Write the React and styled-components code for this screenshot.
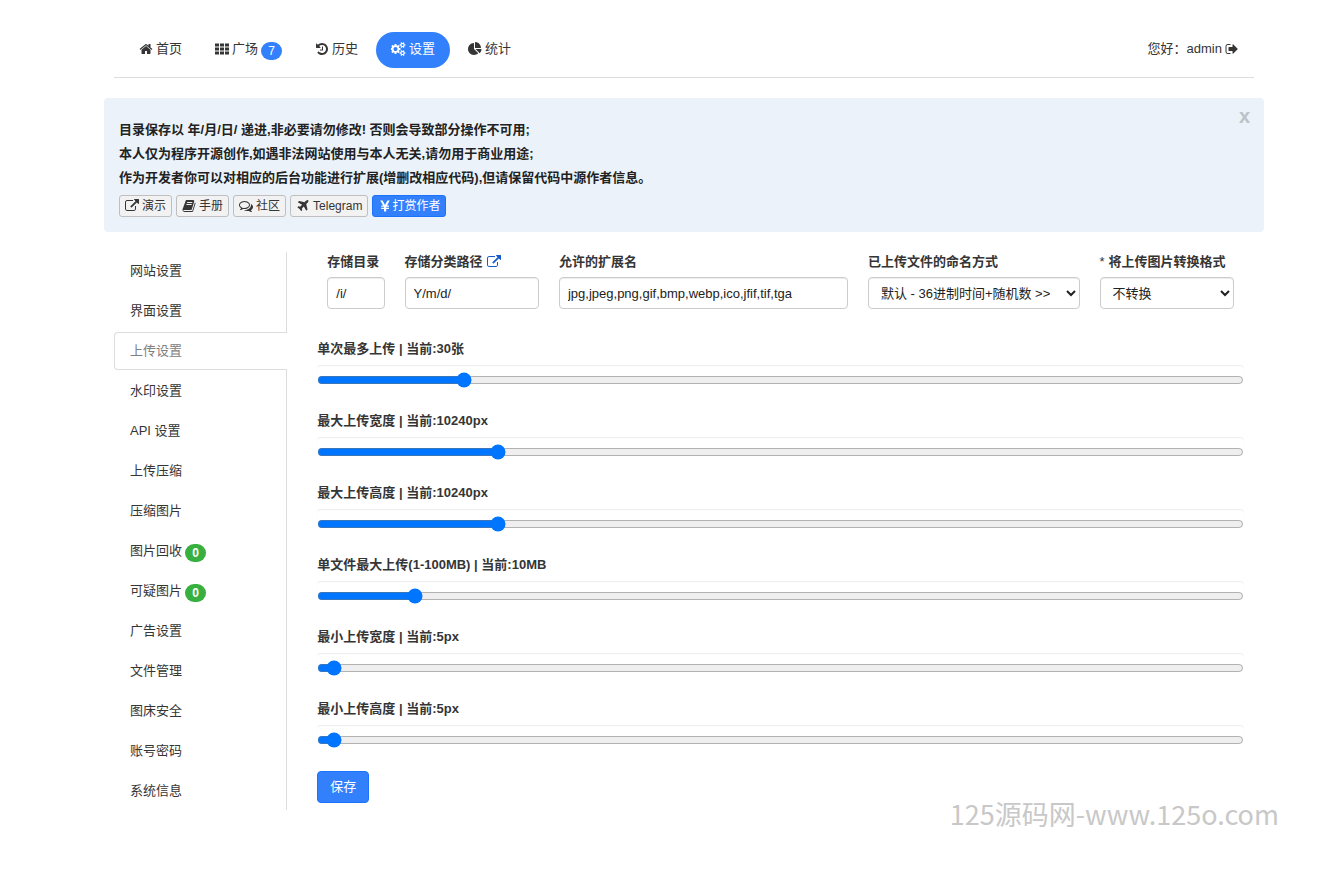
import { useState } from 'react';
import styled, { createGlobalStyle } from 'styled-components';

const GlobalStyle = createGlobalStyle`
    *, *::before, *::after {
        box-sizing: border-box;
    }

    body {
        margin: 0;
        background-color: #fff;
        color: #353535;
        font-family: "Liberation Sans", "Noto Sans CJK SC", sans-serif;
        font-size: 13px;
        line-height: 20px;
    }

    input, select, button {
        font-family: inherit;
        font-size: inherit;
        line-height: inherit;
        color: inherit;
    }
`;

const gear = 'q0 16-149 31-12 27-30 52 51 113 51 138 0 4-4 7-122 71-124 71-8 0-46-47t-52-68q-20 2-30 2t-30-2q-14 21-52 68t-46 47q-2 0-124-71-4-3-4-7 0-25 51-138-18-25-30-52-149-15-149-31v-140q0-16 149-31 13-29 30-52-51-113-51-138 0-4 4-7 4-2 35-20t59-34 30-16q8 0 46 46.5t52 67.5q20-2 30-2t30 2q51-71 92-112l6-2q4 0 124 70 4 3 4 7 0 25-51 138 17 23 30 52 149 15 149 31z';

// [viewBox, path]
const icons = {
    home: ['0 0 1792 1792', 'M1472 992v480q0 26-19 45t-45 19h-384v-384h-256v384h-384q-26 0-45-19t-19-45v-480q0-1 .5-3t.5-3l575-474 575 474q1 2 1 6zm223-69l-62 74q-8 9-21 11h-3q-13 0-21-7l-692-577-692 577q-12 8-24 7-13-2-21-11l-62-74q-8-10-7-23.5t11-21.5l719-599q32-26 76-26t76 26l244 204v-195q0-14 9-23t23-9h192q14 0 23 9t9 23v408l219 182q10 8 11 21.5t-7 23.5z'],
    th: ['0 0 1792 1792', 'M0 192h512v384h-512zM640 192h512v384h-512zM1280 192h512v384h-512zM0 704h512v384h-512zM640 704h512v384h-512zM1280 704h512v384h-512zM0 1216h512v384h-512zM640 1216h512v384h-512zM1280 1216h512v384h-512z'],
    history: ['0 0 1792 1792', 'M1664 896q0 156-61 298t-164 245-245 164-298 61q-172 0-327-72.5t-264-204.5q-7-10-6.5-22.5t8.5-20.5l137-138q10-9 25-9 16 2 23 12 73 95 179 147t225 52q104 0 198.5-40.5t163.5-109.5 109.5-163.5 40.5-198.5-40.5-198.5-109.5-163.5-163.5-109.5-198.5-40.5q-98 0-188 35.5t-160 101.5l137 138q31 30 14 69-17 40-59 40h-448q-26 0-45-19t-19-45v-448q0-42 40-59 39-17 69 14l130 129q107-101 244.5-156.5t284.5-55.5q156 0 298 61t245 164 164 245 61 298zM1024 608v448q0 14-9 23t-23 9h-320q-14 0-23-9t-9-23v-64q0-14 9-23t23-9h224v-352q0-14 9-23t23-9h64q14 0 23 9t9 23z'],
    cogs: ['0 0 1920 1792', 'M832 896q0-106-75-181t-181-75-181 75-75 181 75 181 181 75 181-75 75-181zm768 512q0-52-38-90t-90-38-90 38-38 90q0 53 37.5 90.5t90.5 37.5 90.5-37.5 37.5-90.5zm0-1024q0-52-38-90t-90-38-90 38-38 90q0 53 37.5 90.5t90.5 37.5 90.5-37.5 37.5-90.5zm-384 421v185q0 10-7 19.5t-16 10.5l-155 24q-11 35-32 76 34 48 90 115 7 11 7 20 0 12-7 19-23 30-82.5 89.5t-78.5 59.5q-11 0-21-7l-115-90q-37 19-77 31-11 108-23 155-7 24-30 24h-186q-11 0-20-7.5t-10-17.5l-23-153q-34-10-75-31l-118 89q-7 7-20 7-11 0-21-8-144-133-144-160 0-9 7-19 10-14 41-53t47-61q-23-44-35-82l-152-24q-10-1-17-9.5t-7-19.5v-185q0-10 7-19.5t16-10.5l155-24q11-35 32-76-34-48-90-115-7-11-7-20 0-12 7-20 22-30 82-89t79-59q11 0 21 7l115 90q34-18 77-32 11-108 23-154 7-24 30-24h186q11 0 20 7.5t10 17.5l23 153q34 10 75 31l118-89q8-7 20-7 11 0 21 8 144 133 144 160 0 8-7 19-12 16-42 54t-45 60q23 48 34 82l152 23q10 2 17 10.5t7 19.5zm640 533v140' + gear + 'M1856 314v140' + gear],
    pie: ['0 0 1792 1792', 'M768 890l546 546q-106 108-247.5 168t-298.5 60q-209 0-385.5-103t-279.5-279.5-103-385.5 103-385.5 279.5-279.5 385.5-103v762zm187 6h773q0 157-60 298.5t-168 247.5zm709-128h-768v-768q209 0 385.5 103t279.5 279.5 103 385.5z'],
    signOut: ['0 0 1792 1792', 'M704 1440q0 4 1 20t.5 26.5-3 23.5-10 19.5-20.5 6.5h-320q-119 0-203.5-84.5t-84.5-203.5v-704q0-119 84.5-203.5t203.5-84.5h320q13 0 22.5 9.5t9.5 22.5q0 4 1 20t.5 26.5-3 23.5-10 19.5-20.5 6.5h-320q-66 0-113 47t-47 113v704q0 66 47 113t113 47h312l11.5 1 11.5 3 8 5.5 7 9 2 13.5zm928-544q0 26-19 45l-544 544q-19 19-45 19t-45-19-19-45v-288h-448q-26 0-45-19t-19-45v-384q0-26 19-45t45-19h448v-288q0-26 19-45t45-19 45 19l544 544q19 19 19 45z'],
    external: ['0 0 1792 1792', 'M1408 928v320q0 119-84.5 203.5t-203.5 84.5h-832q-119 0-203.5-84.5t-84.5-203.5v-832q0-119 84.5-203.5t203.5-84.5h704q14 0 23 9t9 23v64q0 14-9 23t-23 9h-704q-66 0-113 47t-47 113v832q0 66 47 113t113 47h832q66 0 113-47t47-113v-320q0-14 9-23t23-9h64q14 0 23 9t9 23zm384-864v512q0 26-19 45t-45 19-45-19l-176-176-652 652q-10 10-23 10t-23-10l-114-114q-10-10-10-23t10-23l652-652-176-176q-19-19-19-45t19-45 45-19h512q26 0 45 19t19 45z'],
    book: ['0 0 1792 1792', 'M1703 478q40 57 18 129l-275 906q-19 64-76.5 107.5t-122.5 43.5h-923q-77 0-148.5-53.5t-99.5-131.5q-24-67-2-127 0-4 3-27t4-37q1-8-3-21.5t-3-19.5q2-11 8-21t16.5-23.5 16.5-23.5q23-38 45-91.5t30-91.5q3-10 .5-30t-.5-28q3-11 17-28t17-23q21-36 42-92t25-90q1-9-2.5-32t.5-28q4-13 22-30.5t22-22.5q19-26 42.5-84.5t27.5-96.5q1-8-3-25.5t-2-26.5q2-8 9-18t18-23 17-21q8-12 16.5-30.5t15-35 16-36 19.5-32 26.5-23.5 36-11.5 47.5 5.5l-1 3q38-9 51-9h761q74 0 114 56t18 130l-274 906q-36 119-71.5 153.5t-128.5 34.5h-869q-27 0-38 15-11 16-1 43 24 70 144 70h923q29 0 56-15.5t35-41.5l300-987q7-22 5-57 38 15 59 43zm-1064 2q-4 13 2 22.5t20 9.5h608q13 0 25.5-9.5t16.5-22.5l21-64q4-13-2-22.5t-20-9.5h-608q-13 0-25.5 9.5t-16.5 22.5zm-83 256q-4 13 2 22.5t20 9.5h608q13 0 25.5-9.5t16.5-22.5l21-64q4-13-2-22.5t-20-9.5h-608q-13 0-25.5 9.5t-16.5 22.5z'],
    comments: ['0 0 1792 1792', 'M704 384q-153 0-286 52t-211.5 141-78.5 191q0 82 53 158t149 132l97 56-35 84q34-20 62-39l44-31 53 10q78 14 153 14 153 0 286-52t211.5-141 78.5-191-78.5-191-211.5-141-286-52zm0-128q191 0 353.5 68.5t256.5 186.5 94 257-94 257-256.5 186.5-353.5 68.5q-86 0-176-16-124 88-278 128-36 9-86 16h-3q-11 0-20.5-8t-11.5-21q-1-3-1-6.5t.5-6.5 2-6l2.5-5 3.5-5.5 4-5 4.5-5 4-4.5q5-6 23-25t26-29.5 22.5-29 25-38.5 20.5-44q-124-72-195-177t-71-224q0-139 94-257t256.5-186.5 353.5-68.5zm822 1169q10 24 20.5 44t25 38.5 22.5 29 26 29.5 23 25q1 1 4 4.5t4.5 5 4 5 3.5 5.5l2.5 5 2 6 .5 6.5-1 6.5q-3 14-13 22t-22 7q-50-7-86-16-154-40-278-128-90 16-176 16-271 0-472-132 58 4 88 4 161 0 309-45t264-129q125-92 192-212t67-254q0-77-23-152 129 71 204 178t75 230q0 120-71 224.5t-195 176.5z'],
    plane: ['0 0 1792 1792', 'M1568 160q44 52 12 148t-108 172l-161 161 160 696q5 19-12 33l-128 96q-7 6-19 6-4 0-7-1-15-3-21-16l-279-508-259 259 53 194q5 17-8 31l-96 96q-9 9-23 9h-2q-15-2-24-13l-189-252-252-189q-11-7-13-23-1-13 9-25l96-97q9-9 23-9 6 0 8 1l194 53 259-259-508-279q-14-8-17-24-2-16 9-27l128-128q14-13 30-8l665 159 160-160q76-76 172-108t148 12z'],
    yen: ['0 0 14 14', 'M2.2 1.5h2.4l2.4 4.5 2.4-4.5h2.4l-2.8 5h2v1.2h-2.8v1h2.8v1.2h-2.8v2.6h-2.2v-2.6h-2.8v-1.2h2.8v-1h-2.8v-1.2h2z'],
};

const Icon = ({ name }) => {
    const [viewBox, d] = icons[name];
    return (
        <Glyph viewBox={viewBox} $wide={name === 'cogs'} aria-hidden='true'>
            <path d={d} />
        </Glyph>
    )
}

const navItems = [
    { icon: 'home', text: '首页' },
    { icon: 'th', text: '广场', count: 7 },
    { icon: 'history', text: '历史' },
    { icon: 'cogs', text: '设置', active: true },
    { icon: 'pie', text: '统计' },
];

const noticeLinks = [
    { icon: 'external', text: '演示' },
    { icon: 'book', text: '手册' },
    { icon: 'comments', text: '社区' },
    { icon: 'plane', text: 'Telegram' },
];

const tabs = [
    { text: '网站设置' },
    { text: '界面设置' },
    { text: '上传设置', active: true },
    { text: '水印设置' },
    { text: 'API 设置' },
    { text: '上传压缩' },
    { text: '压缩图片' },
    { text: '图片回收', count: 0 },
    { text: '可疑图片', count: 0 },
    { text: '广告设置' },
    { text: '文件管理' },
    { text: '图床安全' },
    { text: '账号密码' },
    { text: '系统信息' },
];

const ranges = [
    { id: 'maxUploadFiles', text: '单次最多上传', unit: '张', value: 30, min: 1, max: 192 },
    { id: 'maxWidth', text: '最大上传宽度', unit: 'px', value: 10240, min: 0, max: 54100 },
    { id: 'maxHeight', text: '最大上传高度', unit: 'px', value: 10240, min: 0, max: 54100 },
    { id: 'maxSize', text: '单文件最大上传(1-100MB)', unit: 'MB', value: 10, min: 0, max: 102 },
    { id: 'minWidth', text: '最小上传宽度', unit: 'px', value: 5, min: 0, max: 520 },
    { id: 'minHeight', text: '最小上传高度', unit: 'px', value: 5, min: 0, max: 520 },
];

const RangeField = ({ id, text, unit, value, min, max }) => {
    const [current, setCurrent] = useState(value);
    return (
        <RangeGroup>
            <Label htmlFor={id}>{text} | 当前:{current}{unit}</Label>
            <Range id={id} type='range' min={min} max={max} value={current}
                onChange={(e) => setCurrent(e.target.value)} />
        </RangeGroup>
    )
}

const App = () => {
    return (
        <Page>
            <GlobalStyle />
            <Header>
                <Nav>
                    {navItems.map((item) => (
                        <NavLink href='#' key={item.text} $active={item.active}>
                            <Icon name={item.icon} />
                            <span>{item.text}</span>
                            {item.count !== undefined && <Badge>{item.count}</Badge>}
                        </NavLink>
                    ))}
                </Nav>
                <NavLink href='#'>
                    <span>您好：admin</span>
                    <Icon name='signOut' />
                </NavLink>
            </Header>

            <Notice>
                <div>
                    <NoticeText>目录保存以 年/月/日/ 递进,非必要请勿修改! 否则会导致部分操作不可用;</NoticeText>
                    <NoticeText>本人仅为程序开源创作,如遇非法网站使用与本人无关,请勿用于商业用途;</NoticeText>
                    <NoticeText>作为开发者你可以对相应的后台功能进行扩展(增删改相应代码),但请保留代码中源作者信息。</NoticeText>
                    <NoticeLinks>
                        {noticeLinks.map((link) => (
                            <MiniLink href='#' key={link.text}>
                                <Icon name={link.icon} />
                                {link.text}
                            </MiniLink>
                        ))}
                        <MiniButton type='button'>
                            <Icon name='yen' />
                            打赏作者
                        </MiniButton>
                    </NoticeLinks>
                </div>
                <Close type='button' aria-label='关闭'>x</Close>
            </Notice>

            <Main>
                <Tabs>
                    {tabs.map((tab) => (
                        <Tab href='#' key={tab.text} $active={tab.active}>
                            <span>{tab.text}</span>
                            {tab.count !== undefined && <Badge $green>{tab.count}</Badge>}
                        </Tab>
                    ))}
                </Tabs>
                <Form onSubmit={(e) => e.preventDefault()}>
                    <Fields>
                        <Field $span={1}>
                            <Label htmlFor='path'>存储目录</Label>
                            <Input id='path' type='text' defaultValue='/i/' />
                        </Field>
                        <Field $span={2}>
                            <Label htmlFor='storagePath'>
                                存储分类路径
                                <LabelLink href='#' aria-label='说明'><Icon name='external' /></LabelLink>
                            </Label>
                            <Input id='storagePath' type='text' defaultValue='Y/m/d/' />
                        </Field>
                        <Field $span={4}>
                            <Label htmlFor='extensions'>允许的扩展名</Label>
                            <Input id='extensions' type='text' defaultValue='jpg,jpeg,png,gif,bmp,webp,ico,jfif,tif,tga' />
                        </Field>
                        <Field $span={3}>
                            <Label htmlFor='imgName'>已上传文件的命名方式</Label>
                            <Select id='imgName'>
                                <option>默认 - 36进制时间+随机数 &gt;&gt;</option>
                            </Select>
                        </Field>
                        <Field $span={2}>
                            <Label htmlFor='imgConvert'><Star>*</Star>将上传图片转换格式</Label>
                            <Select id='imgConvert'>
                                <option>不转换</option>
                            </Select>
                        </Field>
                    </Fields>
                    {ranges.map((range) => <RangeField key={range.id} {...range} />)}
                    <Save type='submit'>保存</Save>
                </Form>
            </Main>
            <Watermark>125源码网-www.125o.com</Watermark>
        </Page>
    )
}

const Page = styled.div`
    position: relative;
    padding: 32px 70px 60px 104px;
`;

const Glyph = styled.svg`
    width: ${(props) => (props.$wide ? '15px' : '14px')};
    height: 14px;
    flex: none;
    fill: currentColor;
`;

const Header = styled.header`
    display: flex;
    justify-content: space-between;
    margin: 0 10px 20px;
    padding: 0 0 9px 10px;
    border-bottom: 1px solid #ddd;
`;

const Nav = styled.nav`
    display: flex;
    gap: 3px;
`;

const NavLink = styled.a`
    display: flex;
    align-items: center;
    gap: 3px;
    height: 36px;
    padding: 0 15px 2px;
    border-radius: 18px;
    background-color: ${(props) => (props.$active ? '#3280fc' : 'transparent')};
    color: ${(props) => (props.$active ? '#fff' : '#353535')};
    text-decoration: none;
    white-space: nowrap;
`;

const Badge = styled.span`
    min-width: 21px;
    height: 18px;
    margin-top: 3px;
    border-radius: 9px;
    background-color: ${(props) => (props.$green ? '#38b03f' : '#3280fc')};
    color: #fff;
    font-size: 12px;
    font-weight: ${(props) => (props.$green ? 700 : 400)};
    line-height: 18px;
    text-align: center;
`;

const Notice = styled.section`
    display: flex;
    justify-content: space-between;
    align-items: flex-start;
    margin-bottom: 20px;
    padding: 20px 14px 15px 15px;
    border-radius: 4px;
    background-color: #ebf2f9;
`;

const NoticeText = styled.p`
    margin: 0;
    color: #222;
    font-weight: 700;
    line-height: 24px;
`;

const NoticeLinks = styled.div`
    display: flex;
    gap: 4px;
    margin-top: 5px;
`;

const MiniLink = styled.a`
    display: flex;
    align-items: center;
    gap: 3px;
    height: 22px;
    padding: 0 5px;
    border: 1px solid #bfbfbf;
    border-radius: 3px;
    background-color: #f2f2f2;
    color: #353535;
    font-size: 12px;
    text-decoration: none;
`;

const MiniButton = styled.button`
    display: flex;
    align-items: center;
    height: 22px;
    padding: 0 5px;
    border: 1px solid #1b72fb;
    border-radius: 3px;
    background-color: #3280fc;
    color: #fff;
    font-size: 12px;
`;

const Close = styled.button`
    padding: 0;
    border: 0;
    background: none;
    color: #bcc2c7;
    font-size: 20px;
    font-weight: 700;
    line-height: 1;
    height: 20px;
    margin-top: -12px;
`;

const Main = styled.main`
    display: grid;
    grid-template-columns: 2fr 10fr;
`;

const Tabs = styled.nav`
    display: flex;
    flex-direction: column;
    gap: 2px;
    margin: 0 10px;
    border-right: 1px solid #ddd;
`;

const Tab = styled.a`
    display: flex;
    align-items: center;
    gap: 3px;
    height: 38px;
    padding: 0 15px;
    border: 1px solid transparent;
    color: #353535;
    text-decoration: none;
    ${(props) => props.$active && `
        margin-right: -1px;
        border-color: #ddd;
        border-right: 0;
        border-radius: 4px 0 0 4px;
        background-color: #fff;
        color: #808080;
    `}
`;

const Form = styled.form`
    min-width: 0;
    padding: 0 20px;
`;

const Fields = styled.div`
    display: grid;
    grid-template-columns: repeat(12, 1fr);
    margin-bottom: 30px;
`;

const Field = styled.div`
    grid-column: span ${(props) => props.$span};
    min-width: 0;
    padding: 0 10px;
`;

const Label = styled.label`
    display: flex;
    align-items: center;
    height: 20px;
    margin-bottom: 5px;
    font-weight: 700;
    white-space: nowrap;
`;

const LabelLink = styled.a`
    display: flex;
    margin-left: 4px;
    color: #145ccd;
`;

const Star = styled.span`
    margin-right: 4px;
    font-weight: 400;
`;

const Input = styled.input`
    display: block;
    width: 100%;
    height: 32px;
    padding: 5px 8px;
    border: 1px solid #ccc;
    border-radius: 4px;
    background-color: #fff;
    color: #222;
    box-shadow: inset 0 1px 1px rgba(0, 0, 0, .075);
`;

const Select = styled(Input).attrs({ as: 'select' })``;

const RangeGroup = styled.div`
    margin-bottom: 16px;
`;

const Range = styled.input`
    display: block;
    width: 100%;
    height: 30px;
    margin: 6px 0 0;
    border-radius: 4px;
    box-shadow: inset 0 1px 1px rgba(0, 0, 0, .075);
`;

const Save = styled.button`
    height: 32px;
    padding: 0 12px;
    border: 1px solid #1b72fb;
    border-radius: 4px;
    background-color: #3280fc;
    color: #fff;
`;

const Watermark = styled.div`
    position: absolute;
    right: 55px;
    bottom: 36px;
    color: #c8c8c8;
    font-family: "Noto Sans CJK SC", sans-serif;
    font-size: 27px;
    line-height: 40px;
    white-space: nowrap;
    pointer-events: none;
`;

export default App;
